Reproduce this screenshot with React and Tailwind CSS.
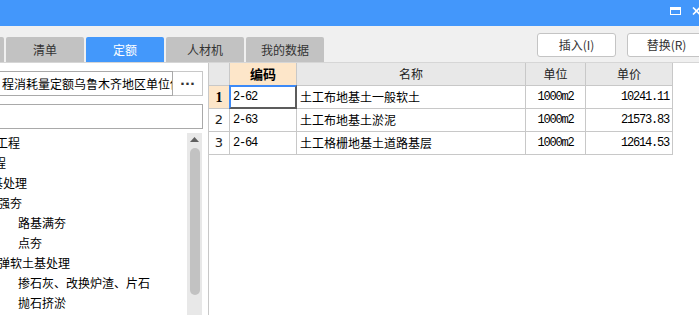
import React from "react";

const cjk = { fontFamily: '"Noto Sans CJK SC", "Noto Sans", sans-serif' };
const mono = { fontFamily: '"Liberation Mono", "DejaVu Sans Mono", monospace', letterSpacing: "-1.2px" };

const tree = [
  { t: "路基工程", ml: -28 },
  { t: "土石方工程", ml: -54 },
  { t: "软基处理", ml: -21 },
  { t: "强夯", ml: -2 },
  { t: "路基满夯", ml: 18 },
  { t: "点夯", ml: 18 },
  { t: "弹软土基处理", ml: -2 },
  { t: "掺石灰、改换炉渣、片石", ml: 18 },
  { t: "抛石挤淤", ml: 18 },
];

const rows = [
  { n: "1", code: "2-62", name: "土工布地基土一般软土", unit: "1000m2", price: "10241.11" },
  { n: "2", code: "2-63", name: "土工布地基土淤泥", unit: "1000m2", price: "21573.83" },
  { n: "3", code: "2-64", name: "土工格栅地基土道路基层", unit: "1000m2", price: "12614.53" },
];

export default function App() {
  return (
    <div className="w-[699px] h-[315px] overflow-hidden bg-[#f0f0f0] text-[#1a1a1a] flex flex-col" style={cjk}>
      {/* title bar */}
      <div className="relative h-[26px] shrink-0 bg-[#4397fb]">
        <div className="absolute left-[670px] top-[7px] w-[11px] h-[8px] border border-white border-t-[3px]" />
        <svg className="absolute left-[692px] top-[7px]" width="10" height="8" viewBox="0 0 10 8">
          <path d="M1 0.5 L8 7.5 M8 0.5 L1 7.5" stroke="white" strokeWidth="1.6" />
        </svg>
      </div>

      {/* toolbar with tabs */}
      <div className="h-[37px] shrink-0 flex border-b border-[#d6d6d6] whitespace-nowrap">
        <div className="self-end flex gap-[2px] -ml-[74px]">
          <div className="w-[78px] h-[25px] rounded-t-[2px] bg-[#c2c2c2]" />
          <div className="w-[78px] h-[25px] rounded-t-[2px] bg-[#c2c2c2] flex items-center justify-center text-[12px] text-[#333]">清单</div>
          <div className="w-[78px] h-[25px] rounded-t-[2px] bg-[#4398fb] flex items-center justify-center text-[12px] text-white">定额</div>
          <div className="w-[78px] h-[25px] rounded-t-[2px] bg-[#c2c2c2] flex items-center justify-center text-[12px] text-[#333]">人材机</div>
          <div className="w-[78px] h-[25px] rounded-t-[2px] bg-[#c2c2c2] flex items-center justify-center text-[12px] text-[#333]">我的数据</div>
        </div>
        <div className="self-start mt-[7px] ml-[213px] flex gap-[11px] shrink-0">
          <div className="w-[79px] h-[24px] shrink-0 bg-white border border-[#c4c4c4] rounded-[3px] flex items-center justify-center text-[12px] text-[#333]">插入(I)</div>
          <div className="w-[79px] h-[24px] shrink-0 bg-white border border-[#c4c4c4] rounded-[3px] flex items-center justify-center text-[12px] text-[#333]">替换(R)</div>
        </div>
      </div>

      {/* body */}
      <div className="flex flex-1 min-h-0">
        {/* left panel */}
        <div className="w-[209px] shrink-0 bg-white border-r border-[#c8c8c8] flex flex-col pt-[8px] overflow-hidden">
          <div className="flex h-[25px] shrink-0">
            <div className="-ml-[2px] w-[175px] h-[25px] border border-[#a9a9a9] pl-[3px] overflow-hidden whitespace-nowrap text-[12px] leading-[23px] text-black">
              程消耗量定额乌鲁木齐地区单位估
            </div>
            <div className="w-[30px] h-[25px] border border-l-0 border-[#c8c8c8] flex items-center justify-center text-[13px] font-bold leading-none text-[#333]" style={{ fontFamily: '"DejaVu Sans", sans-serif' }}>
              ···
            </div>
          </div>
          <div className="mt-[8px] -ml-[2px] w-[205px] h-[25px] shrink-0 border border-[#a9a9a9]" />
          <div className="mt-[4px] flex flex-1 min-h-0">
            <div className="w-[187px] shrink-0 overflow-hidden">
              {tree.map((it, i) => (
                <div key={i} className="h-[20px] whitespace-nowrap text-[12px] leading-[20px] text-black" style={{ marginLeft: it.ml }}>
                  {it.t}
                </div>
              ))}
            </div>
            <div className="w-[15px] shrink-0 bg-[#e8e8e8] flex flex-col items-center pt-[4px]">
              <svg width="9" height="5" viewBox="0 0 9 5">
                <path d="M0 5 L4.5 0 L9 5 Z" fill="#606060" />
              </svg>
              <div className="mt-[6px] w-[10px] h-[147px] rounded-full bg-[#c2c2c2]" />
            </div>
          </div>
        </div>

        {/* grid */}
        <div className="flex-1 bg-white">
          <div className="grid grid-cols-[21px_67px_229px_60px_87px] auto-rows-[23px] text-[12px]">
            <div className="bg-[#e8e8e8] border-r border-b border-[#c8c8c8]" />
            <div className="bg-[#fde6c9] border-r border-b border-[#c8c8c8] flex items-center justify-center font-bold text-[13px] text-black">编码</div>
            <div className="bg-[#e8e8e8] border-r border-b border-[#c8c8c8] flex items-center justify-center text-[#222]">名称</div>
            <div className="bg-[#e8e8e8] border-r border-b border-[#c8c8c8] flex items-center justify-center text-[#222]">单位</div>
            <div className="bg-[#e8e8e8] border-r border-b border-[#c8c8c8] flex items-center justify-center text-[#222]">单价</div>
            {rows.map((r, i) => (
              <React.Fragment key={r.n}>
                <div
                  className={
                    i === 0
                      ? "bg-[#fde6c9] border-r border-b border-[#c8c8c8] flex items-center justify-center font-bold text-[14px] text-black"
                      : "border-r border-b border-[#c8c8c8] flex items-center justify-center text-[13px] text-[#222]"
                  }
                  style={{ fontFamily: i === 0 ? '"Liberation Serif", serif' : '"DejaVu Sans", sans-serif' }}
                >
                  {r.n}
                </div>
                <div
                  className={
                    i === 0
                      ? "border-l-2 border-t-2 border-r-2 border-b-2 border-l-[#3d8af7] border-t-[#3d8af7] border-r-[#5c5c5c] border-b-[#5c5c5c] -ml-[1px] -mt-[1px] flex items-center pl-[2px] text-[12px] text-black"
                      : "border-r border-b border-[#c8c8c8] flex items-center pl-[3px] text-[12px] text-black"
                  }
                  style={mono}
                >
                  {r.code}
                </div>
                <div className="border-r border-b border-[#c8c8c8] flex items-center pl-[3px] text-black">{r.name}</div>
                <div className="border-r border-b border-[#c8c8c8] flex items-center justify-center text-[12px] text-black" style={mono}>
                  {r.unit}
                </div>
                <div className="border-r border-b border-[#c8c8c8] flex items-center justify-end pr-[3px] text-[12px] text-black" style={mono}>
                  {r.price}
                </div>
              </React.Fragment>
            ))}
          </div>
        </div>
      </div>
    </div>
  );
}
